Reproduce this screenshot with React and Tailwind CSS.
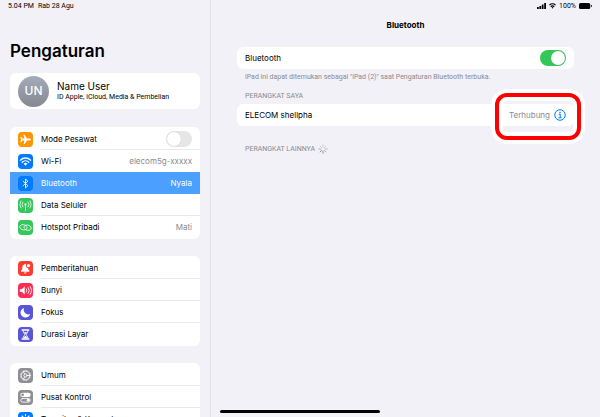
import React from 'react';

const stroke = {
  fill: 'none',
  stroke: 'white',
  strokeWidth: 1.6,
  strokeLinecap: 'round',
  strokeLinejoin: 'round',
};

const icons = {
  plane: (
    <path
      fill="white"
      d="M22 12c0 1-1.300 1.700-3 1.700h-4.200L10 20.800H8l2.200-7.100H6.200l-1.900 2.700H2.500L3.700 12 2.500 7.600h1.800l1.900 2.700h4L8 3.200h2l4.800 7.100H19c1.700 0 3 .7 3 1.700z"
    />
  ),
  wifi: (
    <>
      <path {...stroke} strokeWidth="2.500" d="M2.500 9.500a13.500 13.500 0 0 1 19 0M6 13.300a8.500 8.500 0 0 1 12 0" />
      <path fill="white" d="M8.500 16a5 5 0 0 1 7 0L12 19.800z" />
    </>
  ),
  bluetooth: <path {...stroke} d="M7.500 7.800l9 8.400-4.500 4V3.800l4.500 4-9 8.400" />,
  cellular: (
    <>
      <circle cx="12" cy="10" r="2" fill="white" />
      <path
        {...stroke}
        strokeWidth="1.400"
        d="M12 11v10M7.200 5.500a7 7 0 0 0 0 9M16.800 5.500a7 7 0 0 1 0 9M3.500 3.500a12 12 0 0 0 0 13M20.500 3.500a12 12 0 0 1 0 13"
      />
    </>
  ),
  hotspot: (
    <>
      <path {...stroke} d="M14.800 11.800c.3 2.800-2.300 5-6 4.700-4.200-.3-7.300-3-7.300-5.700s2.700-4.400 6.300-4c2.400.2 4.400 1.200 5.700 2.600" />
      <path {...stroke} d="M9.200 12.200c-.3-2.800 2.300-5 6-4.700 4.200.3 7.300 3 7.300 5.700s-2.700 4.400-6.300 4c-2.400-.2-4.400-1.200-5.700-2.600" />
    </>
  ),
  bell: (
    <>
      <path
        fill="white"
        d="M11.500 3c1 0 1.500.6 1.700 1.400a4.500 4.500 0 0 0 3.600 6.600c.2 3 1.200 3.800 2.500 5.300.6.800.2 1.700-.8 1.700H4.500c-1 0-1.400-.9-.8-1.700 1.500-1.800 2.500-2.500 2.500-6 0-3.200 1.400-5.200 3.600-5.900.2-.8.700-1.400 1.700-1.400zM9 19.200h5c-.3 1.200-1.200 2-2.500 2s-2.200-.8-2.500-2z"
      />
      <circle cx="17.500" cy="6.500" r="3" fill="white" />
    </>
  ),
  sound: (
    <>
      <path fill="white" d="M1.500 9.500h3.500L10.500 4.500v15L5 14.500H1.500z" />
      <path {...stroke} d="M13.500 9a5 5 0 0 1 0 6M17 6.800a8.500 8.500 0 0 1 0 10.400M20.500 4.800a12 12 0 0 1 0 14.400" />
    </>
  ),
  moon: <path fill="white" d="M9.500 3.500a8.500 8.500 0 0 0 11 11.300A9 9 0 1 1 9.500 3.500z" />,
  hourglass: (
    <>
      <path fill="white" d="M5 2.500h14v2.700H5zM5 18.800h14v2.700H5z" />
      <path {...stroke} d="M7.500 5c0 4 3 5 3 7s-3 3-3 7M16.500 5c0 4-3 5-3 7s3 3 3 7" />
      <path fill="white" d="M9 8h6l-3 3.500zM8.500 19c.3-2.500 2-3.500 3.500-4.500 1.500 1 3.200 2 3.500 4.500z" />
    </>
  ),
  gear: (
    <>
      <circle {...stroke} cx="12" cy="12" r="8" />
      <circle {...stroke} cx="12" cy="12" r="9.300" strokeWidth="1.500" strokeDasharray="1.500 1.420" strokeLinecap="butt" />
      <circle {...stroke} cx="12" cy="12" r="3" />
      <path {...stroke} d="M15 12h5M10.500 9.400L8 5.100M10.500 14.600L8 18.900" />
    </>
  ),
  controls: (
    <>
      <rect x="2.500" y="3" width="19" height="8" rx="4" fill="white" />
      <circle cx="6.700" cy="7" r="2.500" fill="#8e8e93" />
      <rect {...stroke} x="3.300" y="13.800" width="17.400" height="6.800" rx="3.400" />
      <circle cx="17" cy="17.200" r="2.700" fill="white" />
    </>
  ),
  display: (
    <>
      <circle cx="12" cy="12" r="4" fill="white" />
      <path {...stroke} strokeWidth="2.200" d="M12 3v2M12 19v2M3 12h2M19 12h2M5.600 5.600L7 7M17 17l1.400 1.400M5.600 18.400L7 17M17 7l1.400-1.400" />
    </>
  ),
};

const groups = [
  [
    { label: 'Mode Pesawat', icon: 'plane', color: 'bg-[#ff9500]', toggle: true },
    { label: 'Wi-Fi', icon: 'wifi', color: 'bg-[#007aff]', value: 'elecom5g-xxxxx' },
    { label: 'Bluetooth', icon: 'bluetooth', color: 'bg-[#007aff]', value: 'Nyala', active: true },
    { label: 'Data Seluler', icon: 'cellular', color: 'bg-[#34c759]' },
    { label: 'Hotspot Pribadi', icon: 'hotspot', color: 'bg-[#34c759]', value: 'Mati' },
  ],
  [
    { label: 'Pemberitahuan', icon: 'bell', color: 'bg-[#ff3b30]' },
    { label: 'Bunyi', icon: 'sound', color: 'bg-[#ff2d55]' },
    { label: 'Fokus', icon: 'moon', color: 'bg-[#5856d6]' },
    { label: 'Durasi Layar', icon: 'hourglass', color: 'bg-[#5856d6]' },
  ],
  [
    { label: 'Umum', icon: 'gear', color: 'bg-[#8e8e93]' },
    { label: 'Pusat Kontrol', icon: 'controls', color: 'bg-[#8e8e93]' },
    { label: 'Tampilan & Kecerahan', icon: 'display', color: 'bg-[#007aff]' },
  ],
];

/**
 * Switch built on a checkbox, the knob is the after pseudo element
 */
function Toggle({ id, defaultChecked = false }) {
  return (
    <input
      id={id}
      type="checkbox"
      role="switch"
      defaultChecked={defaultChecked}
      className="h-4 w-[26px] shrink-0 appearance-none rounded-full bg-[#e6e6e8] p-px after:block after:size-[14px] after:rounded-full after:bg-white after:shadow-[0_0_1px_rgba(0,0,0,0.2)] checked:bg-[#34c759] checked:after:ml-[10px]"
    />
  );
}

function Tile({ icon, color }) {
  return (
    <span className={`flex size-[15px] shrink-0 items-center justify-center rounded-[4px] ${color}`}>
      <svg viewBox="0 0 24 24" className="size-[13px]" aria-hidden="true">
        {icons[icon]}
      </svg>
    </span>
  );
}

function SettingsRow({ item, divider }) {
  const line = divider ? 'border-b border-[#e9e9eb]' : '';

  if (item.toggle) {
    return (
      <li className="flex h-[22px] items-center gap-2 pl-2">
        <Tile icon={item.icon} color={item.color} />
        <div className={`flex h-full flex-1 items-center justify-between pr-2 ${line}`}>
          <label htmlFor="airplane">{item.label}</label>
          <Toggle id="airplane" />
        </div>
      </li>
    );
  }

  return (
    <li>
      <button
        type="button"
        className={`flex h-[22px] w-full items-center gap-2 pl-2 text-left ${item.active ? 'bg-[#4a9fff] text-white' : ''}`}
      >
        <Tile icon={item.icon} color={item.color} />
        <span className={`flex h-full flex-1 items-center justify-between pr-2 ${line}`}>
          <span>{item.label}</span>
          {item.value && <span className={item.active ? '' : 'text-[#8a8a8e]'}>{item.value}</span>}
        </span>
      </button>
    </li>
  );
}

function Sidebar() {
  return (
    <aside className="w-[35%] shrink-0 overflow-hidden">
      <div className="flex h-3 gap-1 px-2 font-['Roboto',sans-serif] text-[7px] leading-[12px]">
        <span>5.04 PM</span>
        <span>Rab 28 Agu</span>
      </div>

      <div className="px-[10px] pt-7">
        <h1 className="text-[17px] leading-[22px] font-semibold">Pengaturan</h1>

        <button type="button" className="mt-[11px] flex h-9 w-full items-center gap-2 rounded-md bg-white px-2 text-left">
          <span className="flex size-[31px] shrink-0 items-center justify-center rounded-full bg-linear-to-b from-[#a5abb9] to-[#858891] text-[12px] font-medium text-white">
            UN
          </span>
          <span>
            <span className="block text-[10px] leading-[12px]">Name User</span>
            <span className="block font-['Roboto',sans-serif] text-[7px] leading-[10px]">
              ID Apple, iCloud, Media &amp; Pembelian
            </span>
          </span>
        </button>

        <nav className="mt-[18px] flex flex-col gap-[17px]">
          {groups.map((items, gIdx) => (
            <ul key={gIdx} className="overflow-hidden rounded-md bg-white py-px">
              {items.map((item, idx) => (
                <SettingsRow
                  key={item.label}
                  item={item}
                  divider={idx < items.length - 1 && !item.active && !items[idx + 1].active}
                />
              ))}
            </ul>
          ))}
        </nav>
      </div>
    </aside>
  );
}

function Spinner() {
  return (
    <svg viewBox="0 0 24 24" className="size-[10px]" fill="none" strokeWidth="2" strokeLinecap="round" aria-hidden="true">
      <path stroke="#77777c" d="M12 17v5M8.500 15.500L5 19" />
      <path stroke="#a5a5aa" d="M7 12H2M15.500 15.500L19 19M17 12h5" />
      <path stroke="#c4c4c9" d="M8.500 8.500L5 5M12 7V2M15.500 8.500L19 5" />
    </svg>
  );
}

function DeviceStatus() {
  return (
    <div className="flex h-3 items-center justify-end gap-[3px] px-2 font-['Roboto',sans-serif] text-[7px] leading-[12px]">
      <svg viewBox="0 0 18 12" className="h-[6px] w-[9px]" aria-hidden="true">
        <path d="M0 8h3.500v4H0zM4.800 6h3.500v6H4.800zM9.600 3h3.500v9H9.600zM14.400 0H18v12h-3.600z" />
      </svg>
      <svg viewBox="0 0 24 20" className="h-[6px] w-[7px]" fill="none" stroke="black" strokeWidth="4" aria-hidden="true">
        <path d="M1.500 7a15 15 0 0 1 21 0M6 12.500a8.500 8.500 0 0 1 12 0" />
        <path d="M9 15.500a4 4 0 0 1 6 0l-3 3.500z" fill="black" stroke="none" />
      </svg>
      <span>100%</span>
      <svg viewBox="0 0 26 12" className="h-[6px] w-[13px]" aria-hidden="true">
        <rect width="22.500" height="12" rx="3" />
        <path d="M24 4c1.300.3 2 1 2 2s-.7 1.700-2 2z" />
      </svg>
    </div>
  );
}

function BluetoothPanel() {
  return (
    <main className="flex-1 border-l border-[#e0e0e5]">
      <DeviceStatus />

      <div className="px-[26px] pt-[7px]">
        <h2 className="text-center text-[8px] leading-[12px] font-bold">Bluetooth</h2>

        <div className="mt-4 flex h-[22px] items-center justify-between rounded-md bg-white px-2">
          <label htmlFor="bluetooth">Bluetooth</label>
          <Toggle id="bluetooth" defaultChecked />
        </div>
        <p className="mt-[3px] px-2 font-['Roboto',sans-serif] text-[7px] leading-[10px] text-[#8a8a8e]">
          iPad ini dapat ditemukan sebagai &quot;iPad (2)&quot; saat Pengaturan Bluetooth terbuka.
        </p>

        <h3 className="mt-[9px] px-2 font-['Roboto',sans-serif] text-[7px] leading-[10px] text-[#8a8a8e]">
          PERANGKAT SAYA
        </h3>
        <div className="relative mt-[3px] flex h-[22px] items-center justify-between rounded-md bg-white px-2">
          <span>ELECOM shellpha</span>
          <span className="flex items-center gap-1 text-[#8a8a8e]">
            Terhubung
            <button type="button" aria-label="Info ELECOM shellpha">
              <svg viewBox="0 0 24 24" className="size-3" fill="none" stroke="#007aff" strokeWidth="2" aria-hidden="true">
                <circle cx="12" cy="12" r="10.500" />
                <circle cx="12" cy="7" r="1.500" fill="#007aff" stroke="none" />
                <path d="M9.500 10.500h3v7M9 17.500h6" />
              </svg>
            </button>
          </span>
          {/* Highlight around the connection status */}
          <div className="pointer-events-none absolute -top-[11px] -right-[7px] h-[47px] w-[86px] rounded-[12px] border-4 border-[#fe0000] shadow-[0_0_0_4px_white,inset_0_0_0_4px_white]" />
        </div>

        <div className="mt-[18px] flex items-center gap-[3px] px-2 font-['Roboto',sans-serif] text-[7px] leading-[10px] text-[#8a8a8e]">
          <h3>PERANGKAT LAINNYA</h3>
          <Spinner />
        </div>
      </div>
    </main>
  );
}

export default function App() {
  return (
    <div className="relative flex h-screen overflow-hidden bg-[#f2f1f7] font-['Inter',sans-serif] text-[8px] leading-[12px] text-black">
      <Sidebar />
      <BluetoothPanel />
      {/* Home indicator */}
      <div className="absolute bottom-1 left-1/2 h-[3px] w-40 -translate-x-1/2 rounded-full bg-black" />
    </div>
  );
}
